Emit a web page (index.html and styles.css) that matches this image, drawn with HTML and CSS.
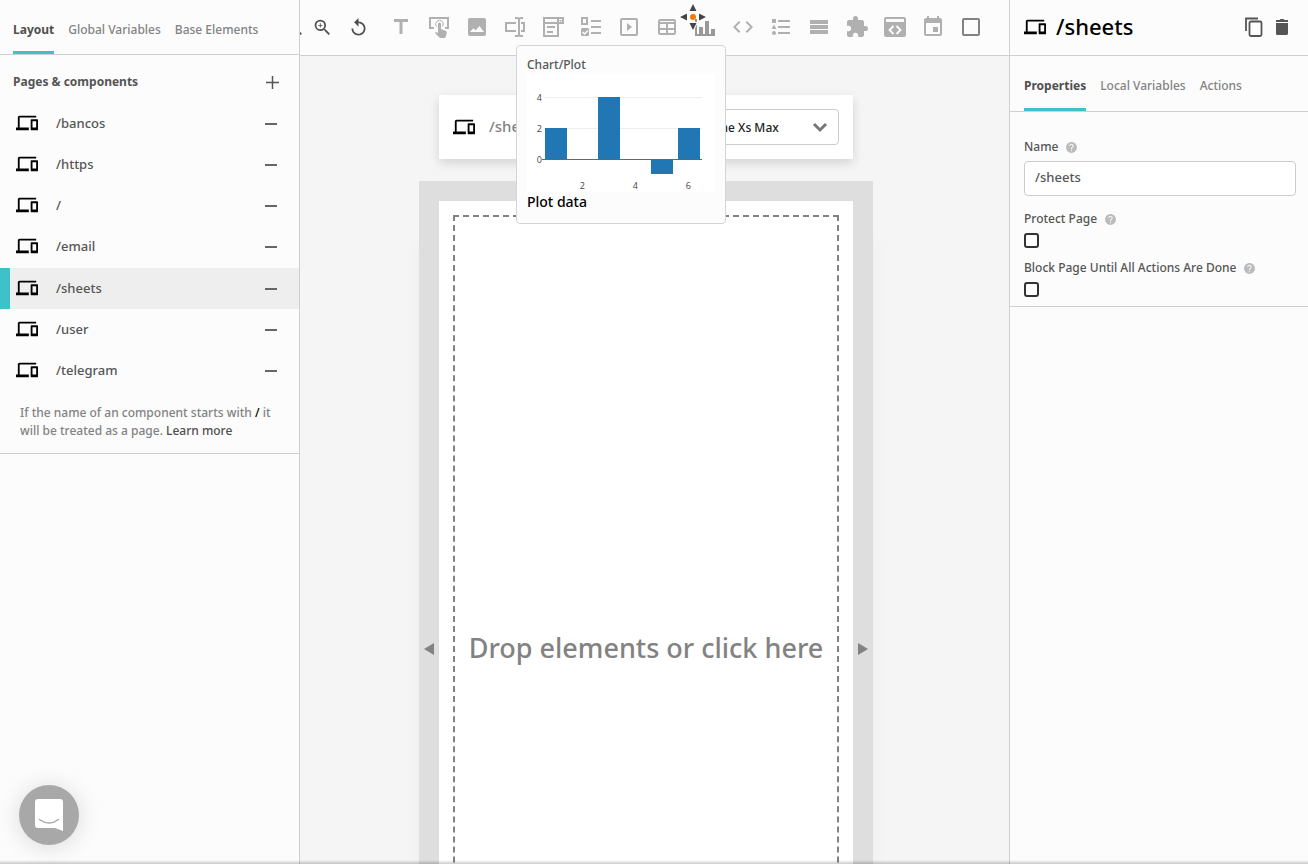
FILE: index.html
```html
<!DOCTYPE html>
<html lang="en">
<head>
<meta charset="utf-8">
<title>/sheets</title>
<link rel="stylesheet" href="styles.css">
</head>
<body>
<svg class="sprite" aria-hidden="true">
  <symbol id="devices" viewBox="0 0 24 24"><path d="M4 6h18V4H4c-1.100 0-2 .9-2 2v11H0v3h14v-3H4V6zm19 2h-6c-.55 0-1 .45-1 1v10c0 .55.45 1 1 1h6c.55 0 1-.45 1-1V9c0-.55-.45-1-1-1zm-1 9h-4v-7h4v7z"/></symbol>
  <symbol id="help" viewBox="0 0 24 24"><path d="M12 2C6.480 2 2 6.480 2 12s4.480 10 10 10 10-4.480 10-10S17.520 2 12 2zm1 17h-2v-2h2v2zm2.070-7.750l-.9.920C13.450 12.900 13 13.500 13 15h-2v-.5c0-1.100.450-2.100 1.170-2.830l1.240-1.260c.370-.360.590-.860.590-1.410 0-1.100-.9-2-2-2s-2 .9-2 2H8c0-2.210 1.790-4 4-4s4 1.790 4 4c0 .880-.360 1.680-.930 2.250z"/></symbol>
</svg>
<div class="app">
  <aside class="panel left">
    <nav class="tabs left-tabs">
      <a class="tab active" href="#layout">Layout</a>
      <a class="tab" href="#globals">Global Variables</a>
      <a class="tab" href="#base">Base Elements</a>
    </nav>
    <section class="pages">
      <header class="pages-head">
        <h2>Pages &amp; components</h2>
        <button class="icon-btn" aria-label="Add page"><svg width="13" height="13"><path d="M6.500 0v13M0 6.500h13" stroke="currentColor" stroke-width="1.500"/></svg></button>
      </header>
      <ul class="page-list">
        <li class="page"><svg class="dev"><use href="#devices"/></svg><a href="#bancos">/bancos</a><button class="icon-btn" aria-label="Remove /bancos"><span class="minus"></span></button></li>
        <li class="page"><svg class="dev"><use href="#devices"/></svg><a href="#https">/https</a><button class="icon-btn" aria-label="Remove /https"><span class="minus"></span></button></li>
        <li class="page"><svg class="dev"><use href="#devices"/></svg><a href="#root">/</a><button class="icon-btn" aria-label="Remove /"><span class="minus"></span></button></li>
        <li class="page"><svg class="dev"><use href="#devices"/></svg><a href="#email">/email</a><button class="icon-btn" aria-label="Remove /email"><span class="minus"></span></button></li>
        <li class="page selected"><svg class="dev"><use href="#devices"/></svg><a href="#sheets">/sheets</a><button class="icon-btn" aria-label="Remove /sheets"><span class="minus"></span></button></li>
        <li class="page"><svg class="dev"><use href="#devices"/></svg><a href="#user">/user</a><button class="icon-btn" aria-label="Remove /user"><span class="minus"></span></button></li>
        <li class="page"><svg class="dev"><use href="#devices"/></svg><a href="#telegram">/telegram</a><button class="icon-btn" aria-label="Remove /telegram"><span class="minus"></span></button></li>
      </ul>
      <p class="hint">If the name of an component starts with <b>/</b> it<br>will be treated as a page. <a href="#more">Learn more</a></p>
    </section>
  </aside>

  <main class="center">
    <div class="toolbar">
      <div class="view-tools">
        <button class="tool dark narrow" aria-label="Zoom out"><svg viewBox="0 0 24 24"><path d="M15.500 14h-.79l-.28-.27A6.470 6.470 0 0 0 16 9.500 6.500 6.500 0 1 0 9.500 16c1.610 0 3.090-.59 4.230-1.570l.27.28v.79l5 4.990L20.490 19l-4.990-5zm-6 0a4.500 4.500 0 1 1 0-9 4.500 4.500 0 0 1 0 9zM7 9h5v1H7z"/></svg></button>
        <button class="tool dark narrow" aria-label="Zoom in"><svg viewBox="0 0 24 24"><path d="M15.500 14h-.79l-.28-.27A6.470 6.470 0 0 0 16 9.500 6.500 6.500 0 1 0 9.500 16c1.610 0 3.090-.59 4.230-1.570l.27.28v.79l5 4.990L20.490 19l-4.990-5zm-6 0a4.500 4.500 0 1 1 0-9 4.500 4.500 0 0 1 0 9zM12 10h-2v2H9v-2H7V9h2V7h1v2h2z"/></svg></button>
        <button class="tool dark undo" aria-label="Reset"><svg viewBox="0 0 24 24"><path d="M12 5V1L7 6l5 5V7c3.310 0 6 2.690 6 6s-2.690 6-6 6-6-2.690-6-6H4c0 4.420 3.580 8 8 8s8-3.580 8-8-3.580-8-8-8z"/></svg></button>
      </div>
      <div class="element-tools">
        <button class="tool" aria-label="Text"><svg viewBox="0 0 24 24"><path d="M5 4v3h5.500v12h3V7H19V4z"/></svg></button>
        <button class="tool" aria-label="Button"><svg viewBox="0 0 24 24"><path d="M7 13H3V3h18v10h-3" fill="none" stroke="currentColor" stroke-width="2"/><path d="M9.500 11.500a3.800 3.800 0 1 1 6 0" fill="none" stroke="currentColor" stroke-width="1"/><path d="M11 9a1.500 1.500 0 0 1 3 0v5l5 2q1 .5.800 1.500L19 21l-1 2h-5l-5-5 1-1 2 1z"/></svg></button>
        <button class="tool" aria-label="Image"><svg viewBox="0 0 24 24"><path d="M21 19V5c0-1.100-.9-2-2-2H5c-1.100 0-2 .9-2 2v14c0 1.100.9 2 2 2h14c1.100 0 2-.9 2-2zM8.500 13l2 2.500L14.500 11l4.500 6H5z"/></svg></button>
        <button class="tool" aria-label="Input"><svg viewBox="0 0 24 24"><path d="M13 8H3v8h10M18 8h3v8h-3M12 3h2q2 0 2 2 0-2 2-2h2M12 21h2q2 0 2-2 0 2 2 2h2M16 4v16" fill="none" stroke="currentColor" stroke-width="2"/></svg></button>
        <button class="tool" aria-label="Dropdown"><svg viewBox="0 0 24 24"><path d="M16 8H3V3h19v5h-5v13H3V8M17 3v5M6 12h8M6 17h6" fill="none" stroke="currentColor" stroke-width="2"/><path d="M18 5h3l-1.500 2z"/></svg></button>
        <button class="tool" aria-label="Checklist"><svg viewBox="0 0 24 24"><path d="M3 3h5v6H3zM12 6h10M12 12h10M12 18h10" fill="none" stroke="currentColor" stroke-width="2"/><rect x="2" y="13" width="8" height="8" rx="1.500"/><path d="M3.500 17l2 2L9 15.500" fill="none" stroke="#fcfcfc" stroke-width="1.500"/></svg></button>
        <button class="tool" aria-label="Video"><svg viewBox="0 0 24 24"><rect x="4" y="4" width="16" height="16" rx="1" fill="none" stroke="currentColor" stroke-width="2"/><path d="M10 8v8l5-4z"/></svg></button>
        <button class="tool" aria-label="Table"><svg viewBox="0 0 24 24"><rect x="4" y="5" width="16" height="14" rx="1" fill="none" stroke="currentColor" stroke-width="2"/><path d="M4 8h16" stroke="currentColor" stroke-width="2"/><path d="M12 8v11M4 14h16" stroke="currentColor" stroke-width="2"/></svg></button>
        <button class="tool hovered" aria-label="Chart/Plot"><svg viewBox="0 0 24 24"><path d="M2 4h2v15h18v2H2zM6 12h4v7H6zM12 6h4v13h-4zM18 14h4v6h-4z"/></svg></button>
        <button class="tool" aria-label="HTML"><svg viewBox="0 0 24 24"><path d="M9.400 16.600L4.800 12l4.600-4.600L8 6l-6 6 6 6 1.400-1.400zm5.200 0l4.600-4.600-4.600-4.600L16 6l6 6-6 6-1.400-1.400z"/></svg></button>
        <button class="tool" aria-label="List"><svg viewBox="0 0 24 24"><path d="M3 4h4v4H3zM5 9.500L7.500 14h-5zM9 5h12v2H9zM9 11h12v2H9zM9 17h12v2H9z"/><circle cx="5" cy="18" r="2"/></svg></button>
        <button class="tool" aria-label="Rows"><svg viewBox="0 0 24 24"><path d="M3 5h18v4H3zM3 10h18v4H3zM3 15h18v4H3z"/></svg></button>
        <button class="tool" aria-label="Plugin"><svg viewBox="0 0 24 24"><path d="M20.500 11H19V7c0-1.100-.9-2-2-2h-4V3.500a2.500 2.500 0 0 0-5 0V5H4c-1.100 0-1.990.9-1.990 2v3.800H3.500c1.490 0 2.700 1.210 2.700 2.700s-1.210 2.700-2.700 2.700H2V20c0 1.100.9 2 2 2h3.800v-1.500c0-1.490 1.210-2.700 2.700-2.700s2.700 1.210 2.700 2.700V22H17c1.100 0 2-.9 2-2v-4h1.500a2.500 2.500 0 0 0 0-5z"/></svg></button>
        <button class="tool" aria-label="Embed"><svg viewBox="0 0 24 24"><path fill-rule="evenodd" d="M3 2h18q2 0 2 2v16q0 2-2 2H3q-2 0-2-2V4q0-2 2-2zM3 4v3h18V4z"/><path d="M10.500 11l-4 4 4 4M13.500 11l4 4-4 4" fill="none" stroke="#fcfcfc" stroke-width="1.800"/></svg></button>
        <button class="tool" aria-label="Date"><svg viewBox="0 0 24 24"><path d="M17 12h-5v5h5v-5zM16 1v2H8V1H6v2H5c-1.110 0-1.990.9-1.990 2L3 19c0 1.100.890 2 2 2h14c1.100 0 2-.9 2-2V5c0-1.100-.9-2-2-2h-1V1h-2zm3 18H5V8h14v11z"/></svg></button>
        <button class="tool box" aria-label="Box"><svg viewBox="0 0 24 24"><rect x="4" y="4" width="16" height="16" rx="1" fill="none" stroke="currentColor" stroke-width="2"/></svg></button>
      </div>
      <svg class="drag-cursor" viewBox="0 0 26 26" aria-hidden="true"><g fill="#444" stroke="#fff" stroke-width="2" paint-order="stroke"><path d="M13 0l3.500 7h-7zM13 26l3.500-7h-7zM0 13l7-3.500v7zM26 13l-7-3.500v7z"/></g><circle cx="13" cy="13" r="3" fill="#f57900"/></svg>
    </div>

    <div class="workspace">
      <div class="stage">
        <div class="page-bar">
          <svg class="dev"><use href="#devices"/></svg>
          <span class="page-name">/sheets</span>
          <select class="device" aria-label="Device"><option>Iphone Xs Max</option></select>
        </div>
        <div class="frame">
          <button class="resize" aria-label="Narrower"><svg width="10" height="12"><path d="M10 0v12L0 6z"/></svg></button>
          <div class="screen"><div class="drop">Drop elements or click here</div></div>
          <button class="resize" aria-label="Wider"><svg width="10" height="12"><path d="M0 0v12l10-6z"/></svg></button>
        </div>
      </div>
    </div>

    <div class="tooltip" role="tooltip">
      <div class="tip-title">Chart/Plot</div>
      <svg class="chart" viewBox="0 0 188 118">
        <rect width="188" height="118" fill="#fff"/>
        <path d="M17 23.500h158M17 54.500h158" stroke="#eee"/>
        <g fill="#2077b4"><path d="M18 54h22v31H18zM71 23h22v62H71zM124 85h22v15h-22zM151 54h22v31h-22z"/></g>
        <path d="M15 85.500h160" stroke="#666"/>
        <g class="ticks"><text x="15" y="27">4</text><text x="15" y="58">2</text><text x="15" y="89">0</text><text x="58" y="115">2</text><text x="111" y="115">4</text><text x="164" y="115">6</text></g>
      </svg>
      <div class="tip-text">Plot data</div>
    </div>
  </main>

  <aside class="panel right">
    <header class="title-bar">
      <svg class="dev"><use href="#devices"/></svg>
      <h1>/sheets</h1>
      <button class="icon-btn" aria-label="Copy"><svg width="20" height="22" viewBox="0 0 20 22"><path d="M2 15V2.500H14" fill="none" stroke="currentColor" stroke-width="1.800"/><rect x="5.500" y="5.500" width="12" height="14.500" rx="1.500" fill="none" stroke="currentColor" stroke-width="1.800"/></svg></button>
      <button class="icon-btn" aria-label="Delete"><svg width="14" height="18" viewBox="0 0 14 18"><path d="M1 5v10.500c0 1 .8 1.500 1.500 1.500h9c.8 0 1.500-.6 1.500-1.500V5zM1 2h3.500l1-1h3l1 1H13v2H1z"/></svg></button>
    </header>
    <nav class="tabs right-tabs">
      <a class="tab active" href="#properties">Properties</a>
      <a class="tab" href="#locals">Local Variables</a>
      <a class="tab" href="#actions">Actions</a>
    </nav>
    <form class="props">
      <div class="label-row"><label for="name">Name</label><svg class="help"><use href="#help"/></svg></div>
      <input class="text-input" id="name" type="text" value="/sheets">
      <div class="label-row"><label for="protect">Protect Page</label><svg class="help"><use href="#help"/></svg></div>
      <input class="check" id="protect" type="checkbox">
      <div class="label-row"><label for="block">Block Page Until All Actions Are Done</label><svg class="help"><use href="#help"/></svg></div>
      <input class="check" id="block" type="checkbox">
    </form>
  </aside>
</div>
<button class="chat" aria-label="Open chat"><svg width="28" height="32" viewBox="0 0 28 32"><path d="M3 0h22q3 0 3 3v29l-8-3H3q-3 0-3-3V3q0-3 3-3z" fill="#fff"/><path d="M4.500 20.500q9.500 7 19 0" fill="none" stroke="#a8a8a8" stroke-width="1.500" stroke-linecap="round"/></svg></button>
<div class="bottom-shade"></div>
</body>
</html>
```
FILE: styles.css
```css
* { box-sizing: border-box; }
body {
  margin: 0;
  font-family: "Noto Sans", "Open Sans", sans-serif;
  font-size: 12px;
  font-weight: 500;
  line-height: 18px;
  color: #555;
}
h1, h2, p, ul { margin: 0; padding: 0; font-weight: 500; }
a { color: inherit; text-decoration: none; }
button { padding: 0; border: 0; background: none; color: inherit; font: inherit; }
svg { display: block; fill: currentColor; }
.sprite { display: none; }
.app {
  display: grid;
  grid-template-columns: 300px minmax(0, 1fr) 299px;
  height: 100vh;
  overflow: hidden;
}
.panel { background: #fcfcfc; min-width: 0; }
.left { border-right: 1px solid #d0d0d0; }
.right { border-left: 1px solid #d0d0d0; }
.dev { width: 22px; height: 22px; color: #000; flex: none; }

.tabs { display: flex; gap: 14px; border-bottom: 1px solid #d0d0d0; }
.left-tabs { height: 55px; padding: 0 13px; }
.right-tabs { height: 56px; padding: 0 14px; }
.tab {
  display: flex;
  align-items: center;
  padding-top: 8px;
  border-bottom: 3px solid transparent;
  color: #828282;
  white-space: nowrap;
}
.tab.active { color: #4f4f4f; font-weight: 700; border-color: #3fc1c9; }

.pages { border-bottom: 1px solid #d0d0d0; padding-bottom: 13px; }
.pages-head {
  display: flex;
  align-items: center;
  justify-content: space-between;
  height: 48px;
  padding: 6px 20px 0 13px;
}
.pages-head h2 { font-size: 12px; font-weight: 700; }
.icon-btn { display: grid; place-items: center; }
.page-list { display: grid; grid-auto-rows: 1fr; min-height: 289px; list-style: none; }
.page {
  display: flex;
  align-items: center;
  gap: 18px;
  padding: 0 22px 2px 6px;
  border-left: 10px solid transparent;
  font-size: 13px;
}
.page a { flex: 1; }
.page.selected { background: #eee; border-color: #3fc1c9; background-clip: padding-box; }
.minus { width: 12px; height: 2px; margin-top: 2px; background: #666; }
.hint { padding: 12px 20px 0; color: #828282; white-space: nowrap; }
.hint b { color: #000; font-weight: 500; }
.hint a { color: #4f4f4f; }

.center { position: relative; display: flex; flex-direction: column; min-width: 0; background: #f5f5f5; overflow: hidden; }
.toolbar {
  position: relative;
  display: flex;
  justify-content: flex-end;
  flex: none;
  height: 56px;
  padding-right: 19px;
  border-bottom: 1px solid #d0d0d0;
  background: #fcfcfc;
}
.view-tools, .element-tools { display: flex; flex: none; }
.view-tools { padding-right: 2px; }
.tool { display: grid; place-items: center; width: 38px; height: 54px; color: #b0b0b0; }
.tool svg { width: 24px; height: 24px; }
.tool.dark { color: #4f4f4f; }
.tool.narrow { width: 28px; }
.tool.narrow svg, .undo svg { width: 21px; height: 21px; }
.tool.undo { width: 44px; }
.tool.hovered { color: #999; }
.tool.box { color: #828282; }
.drag-cursor { position: absolute; top: 4px; right: 303px; width: 26px; height: 26px; overflow: visible; }

.workspace { display: flex; justify-content: center; padding: 39px 17px 0 0; flex: 1; min-height: 0; }
.stage { display: flex; flex-direction: column; align-items: center; gap: 22px; }
.page-bar {
  display: flex;
  align-items: center;
  flex: none;
  width: 414px;
  height: 64px;
  padding: 0 14px;
  background: #fff;
  box-shadow: 0 4px 10px rgba(0, 0, 0, .14);
}
.page-name { flex: 1; padding: 0 0 2px 14px; font-size: 15px; color: #828282; }
.device {
  appearance: none;
  width: 180px;
  height: 36px;
  padding: 1px 12px 0 34px;
  border: 1px solid #ccc;
  border-radius: 4px;
  background: #fff url("data:image/svg+xml,%3Csvg xmlns='http://www.w3.org/2000/svg' width='16' height='12'%3E%3Cpath d='M2 3l6 6 6-6' fill='none' stroke='%23777' stroke-width='3'/%3E%3C/svg%3E") no-repeat right 10px center;
  font: 500 12px "Noto Sans", sans-serif;
  color: #222;
}
.frame {
  display: flex;
  flex: none;
  background: #dedede;
  padding: 20px 0;
  box-shadow: 0 60px 20px rgba(0, 0, 0, .03);
}
.resize { display: grid; place-items: center; width: 20px; color: #828282; }
.screen { display: flex; width: 414px; min-height: 896px; padding: 14px; background: #fff; }
.drop {
  flex: 1;
  display: grid;
  place-items: center;
  padding-bottom: 2px;
  border: 2px dashed #828282;
  font-size: 27px;
  line-height: 36px;
  color: #828282;
  white-space: nowrap;
}

.tooltip {
  position: absolute;
  top: 45px;
  right: 283px;
  width: 210px;
  padding: 9px 10px 11px;
  border: 1px solid #d5d5d5;
  border-radius: 4px;
  background: #fcfcfc;
}
.tip-title { line-height: 19px; }
.chart { width: 188px; height: 118px; }
.ticks { font: 9px "Open Sans", sans-serif; fill: #444; text-anchor: end; }
.tip-text { font-size: 14px; line-height: 20px; color: #000; }

.title-bar { display: flex; align-items: center; height: 56px; padding: 0 19px 2px 14px; border-bottom: 1px solid #d0d0d0; }
.title-bar h1 { flex: 1; padding: 0 0 2px 10px; font-size: 22px; line-height: 32px; color: #000; }
.title-bar .icon-btn + .icon-btn { margin-left: 11px; }
.props { display: flex; flex-direction: column; padding: 25px 12px 9px 14px; border-bottom: 1px solid #d0d0d0; }
.label-row { display: flex; align-items: center; gap: 7px; height: 20px; }
.help { width: 13px; height: 13px; color: #bbb; }
.text-input {
  width: 100%;
  height: 35px;
  margin: 4px 0 13px;
  padding: 0 10px 3px;
  border: 1px solid #ccc;
  border-radius: 4px;
  background: #fff;
  font: 500 13px "Noto Sans", sans-serif;
  color: #555;
}
.check {
  appearance: none;
  width: 15px;
  height: 15px;
  margin: 4px 0 10px;
  border: 2px solid #333;
  border-radius: 3px;
  background: #fff;
}
.check:last-child { margin-bottom: 0; }
.chat {
  position: fixed;
  left: 19px;
  bottom: 19px;
  display: grid;
  place-items: center;
  width: 60px;
  height: 60px;
  border-radius: 50%;
  background: #a8a8a8;
  box-shadow: 0 2px 24px rgba(0, 0, 0, .14);
}
.bottom-shade {
  position: fixed;
  inset: auto 0 0;
  height: 4px;
  background: linear-gradient(transparent, rgba(0, 0, 0, .2));
}
```
